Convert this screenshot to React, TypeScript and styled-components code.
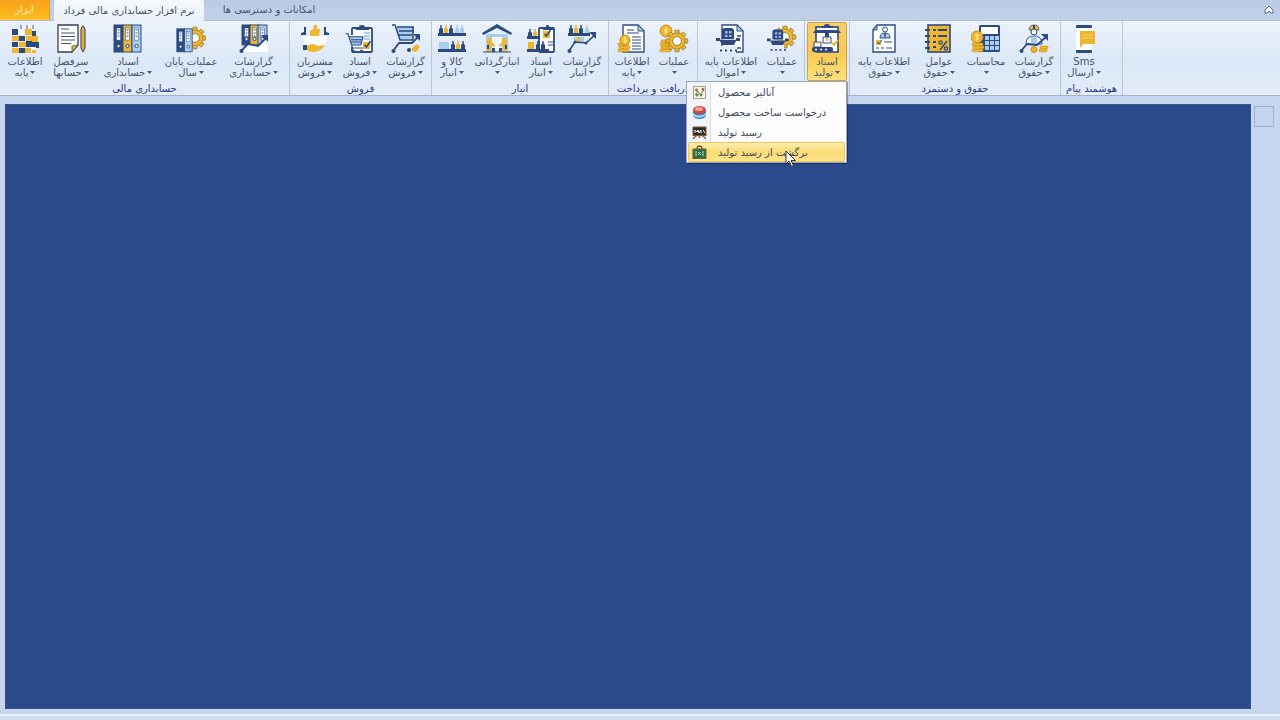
import React, { ReactNode } from "react";
import styled, { createGlobalStyle, css } from "styled-components";

const NAVY = "#2c4a80";
const GOLD = "#efb62f";
const SKY = "#a9cdee";

const GlobalStyle = createGlobalStyle`
  *, *::before, *::after { box-sizing: border-box; }
  body {
    margin: 0;
    font-family: "DejaVu Sans", "Noto Sans", sans-serif;
    font-size: 10px;
    color: #46536b;
  }
  button { font: inherit; color: inherit; }
`;

const Page = styled.div`
  display: flex;
  flex-direction: column;
  min-height: 100vh;
  background: #c5d6ee;
`;

const TabBar = styled.nav`
  display: flex;
  align-items: stretch;
  height: 21px;
  padding-right: 5px;
  background: linear-gradient(#b9cbe6, #c0d0e8);
  border-bottom: 1px solid #b3c0d2;
`;

const Tab = styled.button<{ $kind?: "file" | "active"; $width: number }>`
  width: ${(p) => p.$width}px;
  height: 20px;
  padding: 0;
  border: 0;
  background: transparent;
  line-height: 20px;
  white-space: nowrap;
  ${(p) =>
    p.$kind === "file" &&
    css`
      margin-right: 4px;
      color: #fff0c4;
      background: linear-gradient(#f9a21c, #fbb117 60%, #fdc02c);
      border-right: 1px solid #dd9b38;
    `}
  ${(p) =>
    p.$kind === "active" &&
    css`
      height: 21px;
      background: linear-gradient(#f5f9fe, #ebf2fb);
      border-radius: 2px 2px 0 0;
    `}
`;

const Collapse = styled.button`
  display: flex;
  align-items: center;
  margin-left: auto;
  padding: 0;
  border: 0;
  background: transparent;
`;

const Ribbon = styled.header`
  display: flex;
  height: 75px;
  background: linear-gradient(#ebf2fb, #dce8f6 55%, #e2ecf8);
  border-bottom: 1px solid #a5b3c6;
`;

const Group = styled.section`
  display: flex;
  flex-direction: column;
  padding: 1px 2px 0 2px;
  border-right: 1px solid #b9c7d9;
`;

const Buttons = styled.div`
  display: flex;
  height: 61px;
`;

const GroupTitle = styled.h2`
  margin: 0;
  padding: 0 3px;
  font-size: 10px;
  font-weight: 400;
  line-height: 12px;
  text-align: center;
  white-space: nowrap;
  color: #2a3588;
`;

const Anchor = styled.div`
  position: relative;
`;

const RibbonButton = styled.button<{ $width: number; $open?: boolean }>`
  display: flex;
  flex-direction: column;
  align-items: center;
  width: ${(p) => p.$width}px;
  height: 59px;
  padding: 1px 0 0;
  border: 1px solid transparent;
  background: transparent;
  white-space: nowrap;
  line-height: 11px;
  ${(p) =>
    p.$open &&
    css`
      border-color: #c9a34b;
      border-radius: 2px;
      background: linear-gradient(#f9cf6c, #fbc94e 50%, #ffe27c);
    `}
`;

const Caption = styled.span`
  margin-top: 2px;
`;

const SecondLine = styled.span`
  display: flex;
  align-items: center;
  justify-content: center;
  gap: 2px;
  min-height: 11px;
`;

const Menu = styled.ul`
  position: absolute;
  top: 59px;
  right: 0;
  z-index: 2;
  width: 161px;
  margin: 0;
  padding: 0 1px;
  list-style: none;
  background: linear-gradient(90deg, #f1f4f8 23px, #d9dee6 23px, #d9dee6 24px, #fdfdfe 24px);
  border: 1px solid #9aa7ba;
  box-shadow: 1px 1px 1px rgba(20, 30, 60, 0.4);
`;

const MenuItem = styled.button<{ $hot?: boolean }>`
  display: flex;
  align-items: center;
  gap: 11px;
  width: 100%;
  height: 20px;
  padding: 0 3px;
  border: 1px solid transparent;
  background: transparent;
  white-space: nowrap;
  color: #3f4757;
  ${(p) =>
    p.$hot &&
    css`
      border-color: #ecc75f;
      border-radius: 2px;
      background: linear-gradient(#fdeeb2, #fbdc76 50%, #fde48d);
    `}
`;

const Pointer = styled.svg`
  position: absolute;
  left: 98px;
  top: 68px;
  pointer-events: none;
`;

const Work = styled.div`
  display: flex;
  flex: 1;
  align-items: flex-start;
  gap: 3px;
  padding: 8px 6px 5px 5px;
`;

const Desktop = styled.main`
  flex: 1;
  align-self: stretch;
  background: #2b4a8c;
  border: 1px solid #3a548a;
`;

const SidePanel = styled.aside`
  width: 20px;
  height: 21px;
  margin-top: 2px;
  background: #c3d5ee;
  border: 1px solid #9fb1cb;
`;

const StatusBar = styled.footer`
  height: 6px;
  background: #d3dfee;
  border-top: 2px solid #e6f1fa;
`;

/* ---- drawing pieces shared by several icons ---- */

const Sheet = ({ x = 8, w = 19 }: { x?: number; w?: number }) => (
  <g>
    <path d={`M${x} 1h${w - 6}l6 6v21h-${w}z`} fill="#fff" stroke={NAVY} strokeWidth="1.4" />
    <path d={`M${x + w - 6} 1v6h6z`} fill={SKY} stroke={NAVY} />
  </g>
);

const Coins = ({ x, y, n = 3, w = 9 }: { x: number; y: number; n?: number; w?: number }) => (
  <g fill={GOLD} stroke="#c88d1c" strokeWidth=".6">
    {Array.from({ length: n }, (_, i) => (
      <rect key={i} x={x + (i % 2)} y={y - i * 3} width={w} height="2.8" rx="1" />
    ))}
  </g>
);

const Coin = ({ x, y, r = 5 }: { x: number; y: number; r?: number }) => (
  <g>
    <circle cx={x} cy={y} r={r} fill={GOLD} stroke="#c88d1c" />
    <path d={`M${x + 1.5} ${y - 2}q-3-1-3 .5t1.5 1.5 1.5 1.5-3 .5M${x} ${y - 3.4}v6.8`} fill="none" stroke="#fff0b0" strokeWidth=".9" />
  </g>
);

const Gear = ({ x, y, r = 8 }: { x: number; y: number; r?: number }) => (
  <g>
    {Array.from({ length: 8 }, (_, i) => (
      <rect
        key={i}
        x={x - 2.2}
        y={y - r - 2.8}
        width="4.4"
        height="5"
        rx=".6"
        fill={GOLD}
        stroke="#8b6a26"
        strokeWidth=".7"
        transform={`rotate(${i * 45} ${x} ${y})`}
      />
    ))}
    <circle cx={x} cy={y} r={r} fill={GOLD} stroke="#8b6a26" strokeWidth=".5" />
    <circle cx={x} cy={y} r={r * 0.55} fill="#fff" stroke="#8b6a26" strokeWidth=".8" />
  </g>
);

const Binder = ({ x, fill, h = 27 }: { x: number; fill: string; h?: number }) => (
  <g>
    <rect x={x} y="1" width="9" height={h} fill={fill} stroke={NAVY} />
    <rect x={x + 2.5} y="4" width="4" height={h * 0.45} fill="#fff" stroke={NAVY} strokeWidth=".5" />
    <path d={`M${x + 3.5} 6h2m-2 3h2m-2 3h2`} stroke={NAVY} />
    <circle cx={x + 4.5} cy={h - 5} r="1.6" fill="#fff" stroke={NAVY} />
  </g>
);

const Trend = () => (
  <g>
    <path d="M2 27 8 18l11 1 9-8" fill="none" stroke={NAVY} strokeWidth="1.6" />
    <path d="M22 8h7v7z" fill={NAVY} />
    <circle cx="2.500" cy="27" r="2" fill={NAVY} />
    <circle cx="8" cy="18" r="1.500" fill={NAVY} />
    <circle cx="19" cy="19" r="1.500" fill={NAVY} />
  </g>
);

const Bottle = ({ x, y, fill }: { x: number; y: number; fill: string }) => (
  <path d={`M${x} ${y}v-4l1.300-1.500V${y - 8}h1.400v2.500L${x + 4} ${y - 4}v4z`} fill={fill} />
);

const Shelf = ({ y, x = 1, w = 28 }: { y: number; x?: number; w?: number }) => (
  <rect x={x} y={y} width={w} height="3" fill={NAVY} />
);

const Cart = ({ x = 0, y = 0, s = 1 }: { x?: number; y?: number; s?: number }) => (
  <g transform={`translate(${x} ${y}) scale(${s})`}>
    <path d="M6 5h18l-3 11H9z" fill={SKY} />
    <path d="M1 1h3l6 19h14M6 5h18l-3 11H9M8 9h14M8 12h13" fill="none" stroke={NAVY} strokeWidth="1.600" />
    <circle cx="11" cy="24" r="2" fill={NAVY} />
    <circle cx="22" cy="24" r="2" fill={NAVY} />
  </g>
);

const Board = ({ x = 8, w = 20 }: { x?: number; w?: number }) => (
  <g>
    <rect x={x} y="4" width={w} height="24" rx="1" fill="#fff" stroke={NAVY} strokeWidth="1.800" />
    <path d={`M${x + 4} 6V3h3q0-2 ${w / 2 - 7}-2h0q3 0 3 2h4v3z`} fill={NAVY} />
  </g>
);

const Check = ({ x, y }: { x: number; y: number }) => (
  <g>
    <rect x={x} y={y} width="7" height="7" fill={GOLD} />
    <path d={`M${x + 1.500} ${y + 3}l2 2 4-6`} fill="none" stroke={NAVY} strokeWidth="1.500" />
  </g>
);

const Kiosk = () => (
  <g>
    <path d="M6 15V7q0-3 3-3h6q3 0 3 3v8z" fill={NAVY} />
    <path d="M9 7h2.500v2.500H9zM13 7h2.500v2.500H13zM9 11h2.500v2H9zM13 11h2.500v2H13z" fill="#9fbde2" />
    <path d="M0 14h4v2h16v-2h4v3h-4l-2 4H6l-2-4H0z" fill={NAVY} />
    <path d="M4 15.500h16" stroke="#9fbde2" strokeWidth=".6" />
    <path d="M4 26.500h2M9 26.500h2M14 26.500h2M19 26.500h2" stroke={NAVY} strokeWidth="2" />
  </g>
);

const drawings: Record<string, ReactNode> = {
  blocks: (
    <g>
      <path d="M11 1v4M17 1v4M23 1v4" stroke="#51627f" />
      <path d="M2 12h7v5H2zM9 18h7v5H9zM2 24h7v5H2zM15 5h7v6h-7zM16 12h6v5h-6zM22 12h6v6h-6zM15 24h6v5h-6zM22 24h4v5h-4z" fill={GOLD} />
      <path d="M2 5h6v6H2zM9 12h6v5H9zM2 18h6v5H2zM9 24h6v5H9zM22 7h4v5h-4zM16 17h6v6h-6zM22 18h7v6h-7z" fill={NAVY} />
      <path d="M8 5h6v6H8zM21 23h5v3h-5z" fill="#fff" />
    </g>
  ),
  ledger: (
    <g>
      <path d="M2 1h20v20l-6 7H2z" fill="#fff" stroke="#333f52" strokeWidth="1.300" />
      <path d="M5 5h8M5 9h14M5 12.500h14M5 16h14M5 19.500h10" stroke="#4b5668" strokeWidth="1.100" />
      <path d="M22 21l-6 7v-6z" fill={GOLD} stroke="#333f52" strokeWidth=".7" />
      <path d="M25 5q2-6 4 0v19l-2 4-2-4z" fill="#e5ad3a" stroke="#333f52" strokeWidth="1" />
    </g>
  ),
  binders: (
    <g>
      <Binder x={1} fill={NAVY} />
      <Binder x={10} fill={GOLD} />
      <Binder x={19} fill={SKY} />
    </g>
  ),
  bindersGear: (
    <g>
      <Gear x={19} y={14} r={8} />
      <g transform="translate(0 4) scale(.85)">
        <Binder x={1} fill={NAVY} />
        <Binder x={10} fill={SKY} />
      </g>
    </g>
  ),
  bindersTrend: (
    <g>
      <Binder x={3} fill={NAVY} h={20} />
      <Binder x={11} fill={GOLD} h={20} />
      <Binder x={19} fill={SKY} h={20} />
      <path d="M3 28l7-8 9 2 10-8v14z" fill="#fff" />
      <path d="M2 27l7-7 10 2 9-9" fill="none" stroke={NAVY} strokeWidth="1.800" />
      <path d="M22 11h7v7z" fill={NAVY} />
      <circle cx="2.500" cy="27" r="2" fill={NAVY} />
    </g>
  ),
  customers: (
    <g>
      <path d="M3 12h24q-1 14-12 14T3 12z" fill="#fff" fillOpacity=".8" />
      <path d="M4 3h2v8H1V9l3-1zM24 3h2v5l3 1v2h-5z" fill={NAVY} />
      <path d="M10 6h3l1-5h3v4h3l-1 7h-9z" fill={GOLD} />
      <path d="M7 22q6-4 11 0l7-1q-4 7-12 7-4 0-6-2z" fill={GOLD} />
      <rect x="3" y="21" width="4" height="5" fill={NAVY} />
    </g>
  ),
  salesDoc: (
    <g>
      <Board x={7} w={20} />
      <path d="M19 9h6M19 12h6M19 15h6" stroke={SKY} strokeWidth="2" />
      <Check x={18} y={18} />
      <path d="M3 11h16l-3 12H6z" fill="#fff" />
      <Cart x={0} y={9} s={0.75} />
    </g>
  ),
  salesReport: (
    <g>
      <path d="M5 3h18l-2 12H9z" fill={SKY} />
      <path d="M1 1h3l5 15h13M6 3h17M8 7h15M8 11h13M22 3v13" fill="none" stroke={NAVY} strokeWidth="1.500" />
      <path d="M2 27l6-8h13l7-7" fill="none" stroke={NAVY} strokeWidth="1.800" />
      <path d="M22 10h7v7z" fill={NAVY} />
      <circle cx="2.500" cy="27" r="2" fill={NAVY} />
      <circle cx="18" cy="26" r="2" fill={NAVY} />
      <path d="M21 24l5-4 3 3-4 5-4-1z" fill={GOLD} />
    </g>
  ),
  shelves: (
    <g>
      {[2, 12].map((x) => <Bottle key={x} x={x} y={9} fill={NAVY} />)}
      <Bottle x={7} y={9} fill={GOLD} />
      {[18, 23].map((x) => <Bottle key={x} x={x} y={9} fill={SKY} />)}
      <Shelf y={9} />
      <rect x="2" y="18" width="10" height="7" fill={SKY} />
      <Bottle x={14} y={25} fill={NAVY} />
      <Bottle x={19} y={25} fill={GOLD} />
      <Bottle x={24} y={25} fill={NAVY} />
      <Shelf y={25} />
    </g>
  ),
  warehouse: (
    <g>
      <path d="M4 10h22v18H4z" fill={SKY} />
      <path d="M10 13h10v15H10z" fill="#eef6ff" />
      <path d="M0 9 15 0l15 9-1 2-14-7L1 11z" fill={NAVY} />
      <path d="M6 14h4v4l3 3-1 2-3-2v7H5V18zM24 14h-4v4l-3 3 1 2 3-2v7h4V18z" fill={GOLD} />
      <path d="M10 24h3v4h-3zM17 24h3v4h-3zM5 21h2v4H5zM23 21h2v4h-2z" fill={NAVY} />
      <path d="M1 28h28" stroke={NAVY} />
    </g>
  ),
  stockDoc: (
    <g>
      <Board x={13} w={15} />
      <Check x={17} y={7} />
      <Bottle x={2} y={13} fill={NAVY} />
      <Bottle x={7} y={13} fill={GOLD} />
      <Shelf y={12} w={13} />
      <path d="M22 18h5M22 21h5" stroke={NAVY} />
      <rect x="2" y="18" width="6" height="7" fill={GOLD} />
      <Bottle x={10} y={25} fill={NAVY} />
      <Bottle x={15} y={25} fill={NAVY} />
      <Shelf y={25} w={22} />
    </g>
  ),
  stockReport: (
    <g>
      <Bottle x={2} y={9} fill={NAVY} />
      <Bottle x={7} y={9} fill={GOLD} />
      <Bottle x={12} y={9} fill={NAVY} />
      <Bottle x={18} y={9} fill={SKY} />
      <Shelf y={9} w={22} />
      <path d="M7 13h10v6H7z" fill={SKY} />
      <path d="M10 13h3v6h-3z" fill={GOLD} />
      <Trend />
    </g>
  ),
  coinsDoc: (
    <g>
      <Sheet x={6} w={21} />
      <path d="M10 6h7M10 9h12M15 13h9M15 16h9M15 19h9M15 22h9M15 25h9" stroke={NAVY} strokeWidth="1.200" />
      <Coins x={1} y={25} n={3} w={11} />
      <Coin x={8} y={16} />
    </g>
  ),
  coinsGear: (
    <g>
      <Coins x={1} y={25} n={4} w={11} />
      <Coin x={7} y={7} r={6} />
      <Gear x={18} y={17} r={8} />
    </g>
  ),
  assetDoc: (
    <g>
      <Sheet x={6} w={21} />
      <path d="M21 12h4M21 24h4" stroke={NAVY} strokeWidth="1.300" />
      <path d="M0 22h20v7H0z" fill="#e4edf8" />
      <Kiosk />
    </g>
  ),
  assetGear: (
    <g>
      <Gear x={18} y={13} r={8} />
      <path d="M0 18h17v9H0z" fill="#e4edf8" />
      <g transform="translate(0 2) scale(.9)">
        <Kiosk />
      </g>
    </g>
  ),
  production: (
    <g>
      <rect x="4" y="3" width="22" height="25" fill="#fff" stroke={NAVY} strokeWidth="1.600" />
      <path d="M9 4V2h3q0-2 3-2t3 2h3v2z" fill={NAVY} />
      <path d="M1 9q1-3 6-3h16q5 0 6 3z" fill={NAVY} />
      <path d="M13 9h4v4h-4z" fill={NAVY} />
      <path d="M11 13h8v6h-8z" fill="#fff" stroke={NAVY} />
      <path d="M2 18h7v5H2z" fill="#fff" stroke={NAVY} />
      <path d="M4.500 18h2v2h-2z" fill={GOLD} />
      <path d="M20 19l2 2 4-5" fill="none" stroke={GOLD} strokeWidth="2" />
      <rect x="0" y="23" width="21" height="5" rx="2" fill={NAVY} />
      <path d="M3 25.500h2M8 25.500h2M13 25.500h2" stroke="#fff" strokeWidth="1.500" />
      <rect x="14" y="14" width="2" height="3" fill={GOLD} />
    </g>
  ),
  staffDoc: (
    <g>
      <path d="M8 1h18v27H4V6z" fill="#fff" stroke={NAVY} strokeWidth="1.400" />
      <path d="M8 1v5H4z" fill={SKY} stroke={NAVY} />
      <circle cx="16" cy="5.500" r="2.500" fill="#fff" stroke={NAVY} />
      <path d="M11 14q0-5 5-5t5 5z" fill={SKY} stroke={NAVY} />
      <path d="M16 9v4" stroke={NAVY} strokeWidth="1.500" />
      <rect x="7" y="16" width="5" height="5" fill={GOLD} />
      <path d="M8 18l2 2 3-4" fill="none" stroke={NAVY} />
      <path d="M15 18h8M7 24h3M12 24h3M17 24h6" stroke={NAVY} strokeWidth="1.200" />
    </g>
  ),
  factors: (
    <g>
      <rect x="4" y="1" width="22" height="27" fill={GOLD} stroke={NAVY} strokeWidth="1.600" />
      <path d="M1 6h5M1 12h5M1 18h5M1 24h5" stroke={NAVY} strokeWidth="1.800" />
      <path d="M9 6h3M14 6h9M9 12h3M14 12h9M9 18h3M9 23h3" stroke={NAVY} strokeWidth="2" />
      <path d="M23 17l-7 9" stroke={NAVY} strokeWidth="1.500" />
      <circle cx="16.500" cy="18.500" r="1.600" fill="none" stroke={NAVY} strokeWidth="1.300" />
      <circle cx="22" cy="24.500" r="1.600" fill="none" stroke={NAVY} strokeWidth="1.300" />
    </g>
  ),
  calculator: (
    <g>
      <rect x="8" y="1" width="21" height="27" rx="1.500" fill={NAVY} />
      <rect x="10" y="3" width="17" height="7" fill="#fff" />
      {[12, 17, 22].map((y) => [14, 19, 24].map((x) => (
        <rect key={`${x}-${y}`} x={x} y={y} width="4" height="4" fill={SKY} />
      )))}
      <Coins x={1} y={25} n={3} w={11} />
      <Coin x={6} y={13} r={6} />
    </g>
  ),
  staffReport: (
    <g>
      <path d="M10 6q0-5 5-5t5 5z" fill={GOLD} stroke={NAVY} strokeWidth=".7" />
      <path d="M15 1v4" stroke={NAVY} strokeWidth="2" />
      <circle cx="15" cy="8" r="3" fill="#fff" stroke={NAVY} />
      <path d="M7 20q0-8 8-8t8 8z" fill="#fff" stroke={NAVY} />
      <path d="M12 12.500h6V20h-6z" fill={SKY} />
      <path d="M2 27l6-7 10 1 10-9" fill="none" stroke={NAVY} strokeWidth="1.800" />
      <path d="M22 10h7v7z" fill={NAVY} />
      <circle cx="2.500" cy="27" r="2" fill={NAVY} />
      <circle cx="15" cy="25.500" r="3" fill={GOLD} stroke="#c88d1c" />
      <Coins x={20} y={25} n={2} w={8} />
    </g>
  ),
  phone: (
    <g>
      <rect x="7" y="1" width="16" height="28" rx="1.500" fill="#fff" />
      <path d="M7 4V2q0-1 1-1h14q1 0 1 1v2zM7 26v2q0 1 1 1h14q1 0 1-1v-2z" fill={NAVY} />
      <path d="M11 7h15v13H14l-3 4z" fill={GOLD} />
      <path d="M14 11h9M14 14h9" stroke="#f7d274" />
    </g>
  ),
};

const Icon = ({ name }: { name: string }) => (
  <svg width="30" height="30" viewBox="0 0 30 30" aria-hidden="true">
    {drawings[name]}
  </svg>
);

const Arrow = () => (
  <svg width="5" height="3" viewBox="0 0 5 3" aria-hidden="true">
    <path d="M0 0h5L2.500 3z" fill="#4c5b74" />
  </svg>
);

const menuIcons: Record<string, ReactNode> = {
  analysis: (
    <g>
      <rect x="1.500" y="1.500" width="12" height="12" fill="#f8f5e9" stroke="#a7a08c" />
      <path d="M3 10l3-4 2 4 4-6" fill="none" stroke="#6f8b60" />
      <circle cx="4.500" cy="5" r="1.400" fill="#c2543f" />
      <circle cx="11" cy="4.500" r="1.400" fill="#c2543f" />
      <circle cx="5" cy="10" r="1.600" fill="#568c4c" />
      <path d="M7 9h4l-2 3z" fill="#568c4c" />
    </g>
  ),
  request: (
    <g>
      <path d="M1 6v4q1 4 6.500 4t6.500-4V6z" fill="#3e7bc4" />
      <path d="M1 8q6 5 13 0v2q-6 5-13 1z" fill="#a5d3f3" />
      <ellipse cx="7.500" cy="5" rx="6.500" ry="4" fill="#cf4a42" />
      <ellipse cx="7" cy="4" rx="4" ry="2" fill="#f1a394" />
    </g>
  ),
  receipt: (
    <g>
      <path d="M5 10l-4 4M10 10l4 4M7.500 10v3" stroke="#9a6a35" strokeWidth="1.600" />
      <rect x="1" y="2" width="13" height="8.500" fill="#252b2b" stroke="#8a5a2d" />
      <path d="M3 8V5l2 2 1-2 1 3 2-3v3M11 5l2 3" fill="none" stroke="#f5f3e8" />
    </g>
  ),
  returned: (
    <g>
      <path d="M5 4q0-3 2.500-3T10 4" fill="none" stroke="#665c2d" strokeWidth="1.300" />
      <rect x="1" y="4" width="13" height="9.500" fill="#2e6b48" stroke="#67662f" />
      <path d="M4 6v5M11 6v5M6 7l3 3M9 7l-3 3" stroke="#b9e0b2" />
    </g>
  ),
};

type Item = { icon: string; top: string; bottom?: string; width: number; open?: boolean };
type GroupData = { title?: string; items: Item[] };

const groups: GroupData[] = [
  {
    title: "حسابداری مالی",
    items: [
      { icon: "blocks", top: "اطلاعات", bottom: "پایه", width: 46 },
      { icon: "ledger", top: "سرفصل", bottom: "حسابها", width: 46 },
      { icon: "binders", top: "اسناد", bottom: "حسابداری", width: 68 },
      { icon: "bindersGear", top: "عملیات پایان", bottom: "سال", width: 58 },
      { icon: "bindersTrend", top: "گزارشات", bottom: "حسابداری", width: 67 },
    ],
  },
  {
    title: "فروش",
    items: [
      { icon: "customers", top: "مشتریان", bottom: "فروش", width: 46 },
      { icon: "salesDoc", top: "اسناد", bottom: "فروش", width: 44 },
      { icon: "salesReport", top: "گزارشات", bottom: "فروش", width: 47 },
    ],
  },
  {
    title: "انبار",
    items: [
      { icon: "shelves", top: "کالا و", bottom: "انبار", width: 36 },
      { icon: "warehouse", top: "انبارگردانی", width: 54 },
      { icon: "stockDoc", top: "اسناد", bottom: "انبار", width: 34 },
      { icon: "stockReport", top: "گزارشات", bottom: "انبار", width: 48 },
    ],
  },
  {
    title: "دریافت و پرداخت",
    items: [
      { icon: "coinsDoc", top: "اطلاعات", bottom: "پایه", width: 42 },
      { icon: "coinsGear", top: "عملیات", width: 42 },
    ],
  },
  {
    items: [
      { icon: "assetDoc", top: "اطلاعات پایه", bottom: "اموال", width: 62 },
      { icon: "assetGear", top: "عملیات", width: 40 },
    ],
  },
  { items: [{ icon: "production", top: "اسناد", bottom: "تولید", width: 40, open: true }] },
  {
    title: "حقوق و دستمزد",
    items: [
      { icon: "staffDoc", top: "اطلاعات پایه", bottom: "حقوق", width: 64 },
      { icon: "factors", top: "عوامل", bottom: "حقوق", width: 46 },
      { icon: "calculator", top: "محاسبات", width: 48 },
      { icon: "staffReport", top: "گزارشات", bottom: "حقوق", width: 48 },
    ],
  },
  { title: "هوشمند پیام", items: [{ icon: "phone", top: "Sms", bottom: "ارسال", width: 42 }] },
];

const menu = [
  { icon: "analysis", text: "آنالیز محصول" },
  { icon: "request", text: "درخواست ساخت محصول" },
  { icon: "receipt", text: "رسید تولید" },
  { icon: "returned", text: "برگشت از رسید تولید", hot: true },
];

const ProductionMenu = () => (
  <Menu>
    {menu.map((m) => (
      <li key={m.icon}>
        <MenuItem $hot={m.hot}>
          <svg width="15" height="15" viewBox="0 0 15 15" aria-hidden="true">{menuIcons[m.icon]}</svg>
          <bdi>{m.text}</bdi>
        </MenuItem>
      </li>
    ))}
    <li aria-hidden="true">
      <Pointer width="12" height="18" viewBox="0 0 12 18">
        <path d="M1 1v13l3-3 2.500 5.500 2-1L6 10.500h4.500z" fill="#fff" stroke="#333" />
      </Pointer>
    </li>
  </Menu>
);

const RibbonItem = ({ item }: { item: Item }) => (
  <Anchor>
    <RibbonButton $width={item.width} $open={item.open} aria-haspopup="menu" aria-expanded={!!item.open}>
      <Icon name={item.icon} />
      <Caption><bdi>{item.top}</bdi></Caption>
      <SecondLine>
        {item.bottom && <bdi>{item.bottom}</bdi>}
        <Arrow />
      </SecondLine>
    </RibbonButton>
    {item.open && <ProductionMenu />}
  </Anchor>
);

export default function App() {
  return (
    <Page lang="fa">
      <GlobalStyle />
      <TabBar>
        <Tab $kind="file" $width={50}><bdi>ابزار</bdi></Tab>
        <Tab $kind="active" $width={150}><bdi>نرم افزار حسابداری مالی فرداد</bdi></Tab>
        <Tab $width={130}><bdi>امکانات و دسترسی ها</bdi></Tab>
        <Collapse aria-label="بستن نوار">
          <svg width="12" height="10" viewBox="0 0 12 10" aria-hidden="true">
            <path d="M2 5l4-4 4 4v3H8L6 6 4 8H2z" fill="#fff" stroke="#56657d" />
          </svg>
        </Collapse>
      </TabBar>
      <Ribbon>
        {groups.map((g, i) => (
          <Group key={i}>
            <Buttons>
              {g.items.map((it) => <RibbonItem key={it.icon} item={it} />)}
            </Buttons>
            {g.title && <GroupTitle><bdi>{g.title}</bdi></GroupTitle>}
          </Group>
        ))}
      </Ribbon>
      <Work>
        <Desktop />
        <SidePanel />
      </Work>
      <StatusBar />
    </Page>
  );
}
